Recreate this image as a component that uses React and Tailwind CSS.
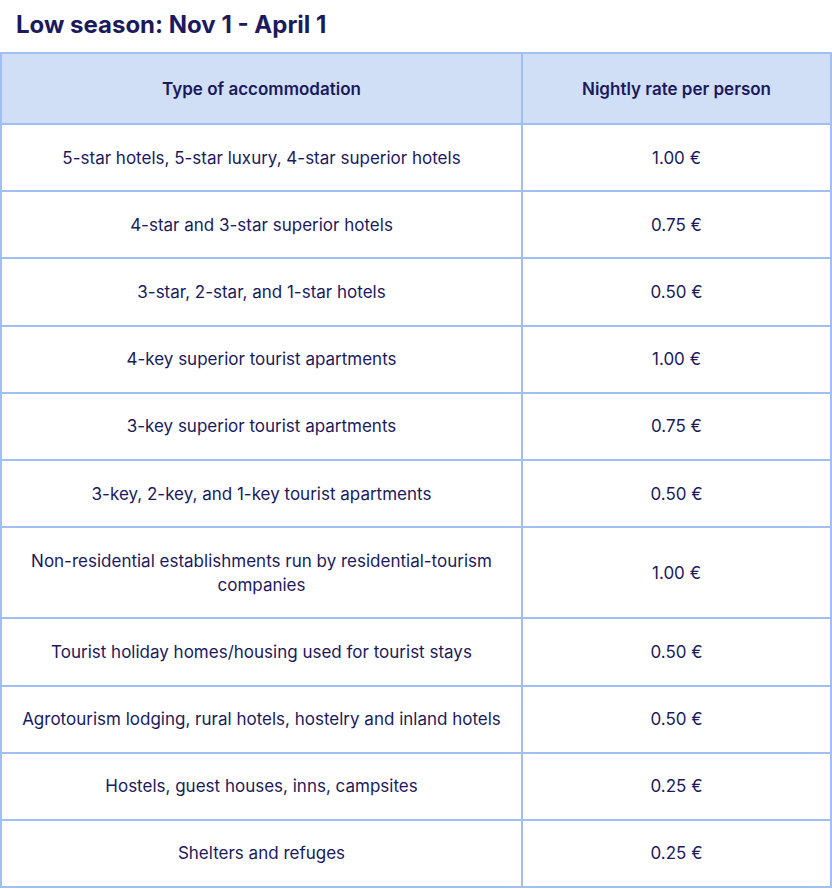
import React from "react";

const rows = [
  ["5-star hotels, 5-star luxury, 4-star superior hotels", "1.00 €"],
  ["4-star and 3-star superior hotels", "0.75 €"],
  ["3-star, 2-star, and 1-star hotels", "0.50 €"],
  ["4-key superior tourist apartments", "1.00 €"],
  ["3-key superior tourist apartments", "0.75 €"],
  ["3-key, 2-key, and 1-key tourist apartments", "0.50 €"],
  ["Non-residential establishments run by residential-tourism companies", "1.00 €"],
  ["Tourist holiday homes/housing used for tourist stays", "0.50 €"],
  ["Agrotourism lodging, rural hotels, hostelry and inland hotels", "0.50 €"],
  ["Hostels, guest houses, inns, campsites", "0.25 €"],
  ["Shelters and refuges", "0.25 €"],
];

export default function App() {
  return (
    <div className="bg-white text-[#1b1a5c] w-[832px]" style={{ fontFamily: "Inter, 'Noto Sans', sans-serif" }}>
      <h2 className="text-[24px] font-bold leading-[30px] pl-4 pt-[10px] pb-[12px]">Low season: Nov 1 - April 1</h2>
      <table className="w-[832px] border-collapse border-2 border-[#a0bff4] text-[17px] leading-[24px] text-center">
        <thead>
          <tr className="bg-[#d0def6]">
            <th className="border-2 border-[#a0bff4] w-[521px] px-4 py-[22.5px] font-semibold">Type of accommodation</th>
            <th className="border-2 border-[#a0bff4] px-4 py-[22.5px] font-semibold">Nightly rate per person</th>
          </tr>
        </thead>
        <tbody>
          {rows.map(([a, b]) => (
            <tr key={a}>
              <td className="border-2 border-[#a0bff4] px-4 py-[20.6px]">{a}</td>
              <td className="border-2 border-[#a0bff4] px-4 py-[20.6px]">{b}</td>
            </tr>
          ))}
        </tbody>
      </table>
    </div>
  );
}
